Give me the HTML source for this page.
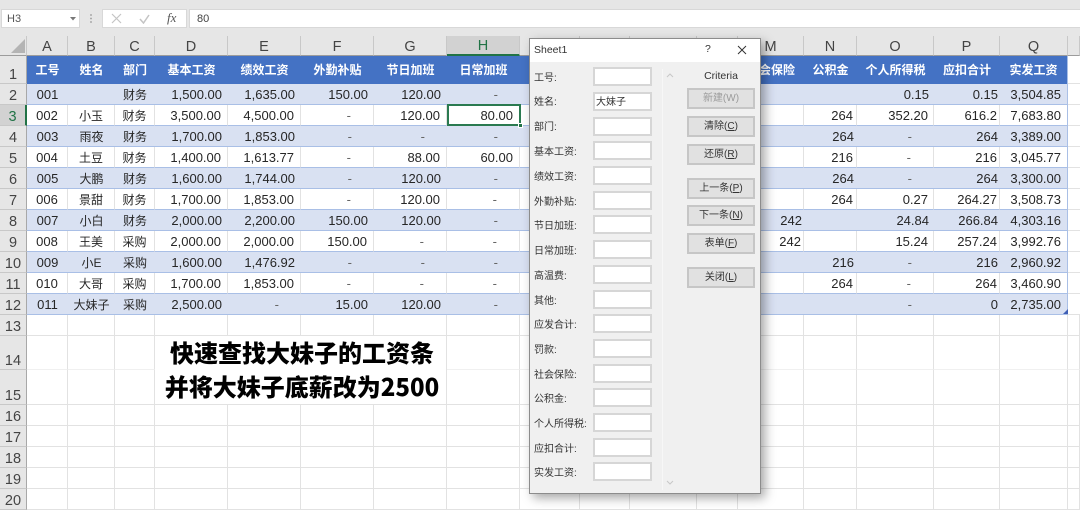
<!DOCTYPE html>
<html><head><meta charset="utf-8">
<style>
html,body{margin:0;padding:0;width:1080px;height:511px;overflow:hidden;background:#fff}
body{position:relative;font-family:"Liberation Sans","Noto Sans CJK SC",sans-serif;color:#222}
.abs{position:absolute}
#top{left:0;top:0;width:1080px;height:36px;background:#e6e6e6}
.box{position:absolute;background:#fff;border:1px solid #d8d8d8;box-sizing:border-box}
table{position:absolute;left:0;top:36px;border-collapse:separate;border-spacing:0;table-layout:fixed;width:1080px}
td,th{box-sizing:border-box;padding:0;overflow:hidden;white-space:nowrap;font-weight:400;border-right:1px solid #e2e2e2;border-bottom:1px solid #e2e2e2;font-size:13px;text-align:right;color:#262626}
tr.ch th{background:#e6e6e6;font-size:14.5px;color:#444;text-align:center;height:19px;line-height:16px;padding-top:2px;border-right:1px solid #c8c8c8;border-bottom:1px solid #9c9c9c}
th.r{background:#e6e6e6;font-size:14.5px;color:#444;text-align:center;vertical-align:bottom;line-height:16px;border-right:1px solid #a8a8a8;border-bottom:1px solid #c8c8c8}
tr.h td{background:#4472c4;color:#fff;font-weight:700;font-size:12px;text-align:center;border:0;vertical-align:middle;padding-bottom:2px}
tr.b td{background:#d9e1f2;border-right:0;border-bottom:1px solid #a9bfe6}
tr.w td{border-bottom:1px solid #a9bfe6}
tr td.e{background:#fff;border-right:0;border-bottom:1px solid #e2e2e2}
td.c{text-align:center;font-size:12px}
td.n{text-align:center;font-size:13px}
td.p6{padding-right:6px}td.p3{padding-right:3px}td.p2{padding-right:2px}td.p5{padding-right:5px}
td.d{padding-right:22px;color:#666}
tr.b td.q,tr.w td.q,tr.h td.q{border-right:1px solid #a9bfe6}
tr.lt td{border-bottom-color:#f0f0f0}
#dlg{left:529px;top:38px;width:232px;height:456px;background:#f0f0f0;border:1px solid #8c8c8c;box-sizing:border-box;box-shadow:4px 4px 10px rgba(0,0,0,.35);overflow:hidden}
#ttl{position:absolute;left:0;top:0;width:230px;height:23px;background:#fff}
#dlg .l{position:absolute;left:4px;margin-top:2px;font-size:10px;color:#333;line-height:14px;white-space:nowrap}
#dlg .i{position:absolute;left:63px;width:59px;height:19px;background:#fff;border:2px solid #d6d6d6;box-sizing:border-box;font-size:10px;line-height:17px;padding-left:1px;color:#333}
#dlg .b{position:absolute;left:157px;width:68px;height:21px;background:#e1e1e1;border:2px solid #c6c6c6;box-sizing:border-box;font-size:10px;line-height:17px;text-align:center;color:#333}
#dlg u{text-underline-offset:1px}
.big{position:absolute;left:102px;width:400px;text-align:center;font-family:"Noto Sans CJK SC",sans-serif;font-weight:900;font-size:24px;color:#000;line-height:34px}
</style></head><body>
<div class="abs" id="top">
<div class="box" style="left:1px;top:9px;width:79px;height:19px;font-size:11px;line-height:18px;padding-left:5px;color:#555">H3</div>
<svg class="abs" style="left:70px;top:17px" width="6" height="4"><path d="M0 0H6L3 3.5Z" fill="#777"/></svg>
<svg class="abs" style="left:89px;top:14px" width="4" height="10"><path d="M1 1h2M1 4.5h2M1 8h2" stroke="#aaa" stroke-width="1.4"/></svg>
<div class="box" style="left:102px;top:9px;width:85px;height:19px"></div>
<svg class="abs" style="left:111px;top:13px" width="11" height="11"><path d="M1 1L10 10M10 1L1 10" stroke="#c4c4c4" stroke-width="1.2" fill="none"/></svg>
<svg class="abs" style="left:139px;top:14px" width="11" height="10"><path d="M1 5L4.5 9L10 1" stroke="#c4c4c4" stroke-width="1.5" fill="none"/></svg>
<div class="abs" style="left:167px;top:10px;font:italic 13px 'Liberation Serif',serif;color:#555;line-height:16px">fx</div>
<div class="box" style="left:189px;top:9px;width:892px;height:19px;font-size:11px;line-height:18px;padding-left:7px;color:#444">80</div>
</div>
<table>
<colgroup><col style="width:27px"><col style="width:41px"><col style="width:47px"><col style="width:40px"><col style="width:73px"><col style="width:73px"><col style="width:73px"><col style="width:73px"><col style="width:73px"><col style="width:60px"><col style="width:50px"><col style="width:67px"><col style="width:41px"><col style="width:66px"><col style="width:53px"><col style="width:77px"><col style="width:66px"><col style="width:68px"><col style="width:12px"></colgroup>
<tr class="ch"><th style="background:#e6e6e6"></th><th>A</th><th>B</th><th>C</th><th>D</th><th>E</th><th>F</th><th>G</th><th style="background:#d2d2d2;color:#217346;border-bottom:2px solid #217346">H</th><th>I</th><th>J</th><th>K</th><th>L</th><th>M</th><th>N</th><th>O</th><th>P</th><th>Q</th><th></th></tr>
<tr class="h" style="height:28px"><th class="r">1</th><td>工号</td><td>姓名</td><td>部门</td><td>基本工资</td><td>绩效工资</td><td>外勤补贴</td><td>节日加班</td><td>日常加班</td><td>高温费</td><td></td><td></td><td></td><td>社会保险</td><td>公积金</td><td>个人所得税</td><td>应扣合计</td><td class="q">实发工资</td><td class="e"></td></tr>
<tr class="b" style="height:21px"><th class="r">2</th><td class="n">001</td><td class="c"></td><td class="c">财务</td><td class="p6">1,500.00</td><td class="p6">1,635.00</td><td class="p6">150.00</td><td class="p6">120.00</td><td class="d">-</td><td></td><td></td><td></td><td></td><td></td><td></td><td class="p5">0.15</td><td class="p2">0.15</td><td class="p6 q">3,504.85</td><td class="e"></td></tr>
<tr class="w" style="height:21px"><th class="r" style="background:#d2d2d2;color:#217346;border-right:2px solid #217346">3</th><td class="n">002</td><td class="c">小玉</td><td class="c">财务</td><td class="p6">3,500.00</td><td class="p6">4,500.00</td><td class="d">-</td><td class="p6">120.00</td><td class="p6">80.00</td><td></td><td></td><td></td><td></td><td></td><td class="p3">264</td><td class="p5">352.20</td><td class="p2">616.2</td><td class="p6 q">7,683.80</td><td class="e"></td></tr>
<tr class="b" style="height:21px"><th class="r">4</th><td class="n">003</td><td class="c">雨夜</td><td class="c">财务</td><td class="p6">1,700.00</td><td class="p6">1,853.00</td><td class="d">-</td><td class="d">-</td><td class="d">-</td><td></td><td></td><td></td><td></td><td></td><td class="p3">264</td><td class="d">-</td><td class="p2">264</td><td class="p6 q">3,389.00</td><td class="e"></td></tr>
<tr class="w" style="height:21px"><th class="r">5</th><td class="n">004</td><td class="c">土豆</td><td class="c">财务</td><td class="p6">1,400.00</td><td class="p6">1,613.77</td><td class="d">-</td><td class="p6">88.00</td><td class="p6">60.00</td><td></td><td></td><td></td><td></td><td></td><td class="p3">216</td><td class="d">-</td><td class="p2">216</td><td class="p6 q">3,045.77</td><td class="e"></td></tr>
<tr class="b" style="height:21px"><th class="r">6</th><td class="n">005</td><td class="c">大鹏</td><td class="c">财务</td><td class="p6">1,600.00</td><td class="p6">1,744.00</td><td class="d">-</td><td class="p6">120.00</td><td class="d">-</td><td></td><td></td><td></td><td></td><td></td><td class="p3">264</td><td class="d">-</td><td class="p2">264</td><td class="p6 q">3,300.00</td><td class="e"></td></tr>
<tr class="w" style="height:21px"><th class="r">7</th><td class="n">006</td><td class="c">景甜</td><td class="c">财务</td><td class="p6">1,700.00</td><td class="p6">1,853.00</td><td class="d">-</td><td class="p6">120.00</td><td class="d">-</td><td></td><td></td><td></td><td></td><td></td><td class="p3">264</td><td class="p5">0.27</td><td class="p2">264.27</td><td class="p6 q">3,508.73</td><td class="e"></td></tr>
<tr class="b" style="height:21px"><th class="r">8</th><td class="n">007</td><td class="c">小白</td><td class="c">财务</td><td class="p6">2,000.00</td><td class="p6">2,200.00</td><td class="p6">150.00</td><td class="p6">120.00</td><td class="d">-</td><td></td><td></td><td></td><td></td><td class="p2">242</td><td></td><td class="p5">24.84</td><td class="p2">266.84</td><td class="p6 q">4,303.16</td><td class="e"></td></tr>
<tr class="w" style="height:21px"><th class="r">9</th><td class="n">008</td><td class="c">王美</td><td class="c">采购</td><td class="p6">2,000.00</td><td class="p6">2,000.00</td><td class="p6">150.00</td><td class="d">-</td><td class="d">-</td><td></td><td></td><td></td><td></td><td class="p2">242</td><td></td><td class="p5">15.24</td><td class="p2">257.24</td><td class="p6 q">3,992.76</td><td class="e"></td></tr>
<tr class="b" style="height:21px"><th class="r">10</th><td class="n">009</td><td class="c">小E</td><td class="c">采购</td><td class="p6">1,600.00</td><td class="p6">1,476.92</td><td class="d">-</td><td class="d">-</td><td class="d">-</td><td></td><td></td><td></td><td></td><td></td><td class="p3">216</td><td class="d">-</td><td class="p2">216</td><td class="p6 q">2,960.92</td><td class="e"></td></tr>
<tr class="w" style="height:21px"><th class="r">11</th><td class="n">010</td><td class="c">大哥</td><td class="c">采购</td><td class="p6">1,700.00</td><td class="p6">1,853.00</td><td class="d">-</td><td class="d">-</td><td class="d">-</td><td></td><td></td><td></td><td></td><td></td><td class="p3">264</td><td class="d">-</td><td class="p2">264</td><td class="p6 q">3,460.90</td><td class="e"></td></tr>
<tr class="b" style="height:21px"><th class="r">12</th><td class="n">011</td><td class="c">大妹子</td><td class="c">采购</td><td class="p6">2,500.00</td><td class="d">-</td><td class="p6">15.00</td><td class="p6">120.00</td><td class="d">-</td><td></td><td></td><td></td><td></td><td></td><td></td><td class="d">-</td><td class="p2">0</td><td class="p6 q">2,735.00</td><td class="e"></td></tr>
<tr style="height:21px"><th class="r">13</th><td></td><td></td><td></td><td></td><td></td><td></td><td></td><td></td><td></td><td></td><td></td><td></td><td></td><td></td><td></td><td></td><td></td><td></td></tr>
<tr class="lt" style="height:34px"><th class="r">14</th><td></td><td></td><td></td><td style="border-right:0;border-bottom:0"></td><td style="border-right:0;border-bottom:0"></td><td style="border-right:0;border-bottom:0"></td><td style="border-bottom:0"></td><td></td><td></td><td></td><td></td><td></td><td></td><td></td><td></td><td></td><td></td><td></td></tr>
<tr style="height:35px"><th class="r">15</th><td></td><td></td><td></td><td style="border-right:0"></td><td style="border-right:0"></td><td style="border-right:0"></td><td></td><td></td><td></td><td></td><td></td><td></td><td></td><td></td><td></td><td></td><td></td><td></td></tr>
<tr style="height:21px"><th class="r">16</th><td></td><td></td><td></td><td></td><td></td><td></td><td></td><td></td><td></td><td></td><td></td><td></td><td></td><td></td><td></td><td></td><td></td><td></td></tr>
<tr style="height:21px"><th class="r">17</th><td></td><td></td><td></td><td></td><td></td><td></td><td></td><td></td><td></td><td></td><td></td><td></td><td></td><td></td><td></td><td></td><td></td><td></td></tr>
<tr style="height:21px"><th class="r">18</th><td></td><td></td><td></td><td></td><td></td><td></td><td></td><td></td><td></td><td></td><td></td><td></td><td></td><td></td><td></td><td></td><td></td><td></td></tr>
<tr style="height:21px"><th class="r">19</th><td></td><td></td><td></td><td></td><td></td><td></td><td></td><td></td><td></td><td></td><td></td><td></td><td></td><td></td><td></td><td></td><td></td><td></td></tr>
<tr style="height:21px"><th class="r">20</th><td></td><td></td><td></td><td></td><td></td><td></td><td></td><td></td><td></td><td></td><td></td><td></td><td></td><td></td><td></td><td></td><td></td><td></td></tr>
</table>
<svg class="abs" style="left:10px;top:38px" width="16" height="16"><path d="M15 1V15H1Z" fill="#b4b4b4"/></svg>
<div class="abs" style="left:447px;top:104px;width:74px;height:22px;border:2px solid #2a7a50;box-sizing:border-box"></div>
<div class="abs" style="left:518px;top:123px;width:3px;height:3px;background:#217346;border:1px solid #fff"></div>
<svg class="abs" style="left:1063px;top:309px" width="5" height="5"><path d="M5 0V5H0Z" fill="#3f5fb5"/></svg>
<div class="big" style="top:335px">快速查找大妹子的工资条</div>
<div class="big" style="top:369px">并将大妹子底薪改为2500</div>
<div class="abs" id="dlg">
<div id="ttl"></div>
<div class="abs" style="left:4px;top:3px;font-size:10.5px;line-height:17px;color:#333">Sheet1</div>
<div class="abs" style="left:175px;top:2px;font-size:10.5px;line-height:16px;color:#333">?</div>
<svg class="abs" style="left:207px;top:6px" width="10" height="10"><path d="M1 1L9 9M9 1L1 9" stroke="#333" stroke-width="1" fill="none"/></svg>
<div class="abs" style="left:132px;top:30px;width:1px;height:421px;background:#f7f7f7"></div>
<svg class="abs" style="left:136px;top:34px" width="8" height="5"><path d="M1 4L4 1L7 4" stroke="#c8c8c8" fill="none"/></svg>
<svg class="abs" style="left:136px;top:441px" width="8" height="5"><path d="M1 1L4 4L7 1" stroke="#c8c8c8" fill="none"/></svg>
<div class="abs" style="left:157px;width:68px;top:30px;text-align:center;font-size:10.5px;line-height:14px;color:#333">Criteria</div>
<div class="l" style="top:31px">工号:</div><div class="i" style="top:28px"></div>
<div class="l" style="top:55px">姓名:</div><div class="i" style="top:53px">大妹子</div>
<div class="l" style="top:80px">部门:</div><div class="i" style="top:78px"></div>
<div class="l" style="top:105px">基本工资:</div><div class="i" style="top:102px"></div>
<div class="l" style="top:130px">绩效工资:</div><div class="i" style="top:127px"></div>
<div class="l" style="top:155px">外勤补贴:</div><div class="i" style="top:152px"></div>
<div class="l" style="top:179px">节日加班:</div><div class="i" style="top:176px"></div>
<div class="l" style="top:204px">日常加班:</div><div class="i" style="top:201px"></div>
<div class="l" style="top:229px">高温费:</div><div class="i" style="top:226px"></div>
<div class="l" style="top:254px">其他:</div><div class="i" style="top:251px"></div>
<div class="l" style="top:278px">应发合计:</div><div class="i" style="top:275px"></div>
<div class="l" style="top:303px">罚款:</div><div class="i" style="top:300px"></div>
<div class="l" style="top:328px">社会保险:</div><div class="i" style="top:325px"></div>
<div class="l" style="top:352px">公积金:</div><div class="i" style="top:349px"></div>
<div class="l" style="top:377px">个人所得税:</div><div class="i" style="top:374px"></div>
<div class="l" style="top:402px">应扣合计:</div><div class="i" style="top:399px"></div>
<div class="l" style="top:426px">实发工资:</div><div class="i" style="top:423px"></div>
<div class="b" style="top:49px;color:#9a9a9a">新建(W)</div>
<div class="b" style="top:77px">清除(<u>C</u>)</div>
<div class="b" style="top:105px">还原(<u>R</u>)</div>
<div class="b" style="top:139px">上一条(<u>P</u>)</div>
<div class="b" style="top:166px">下一条(<u>N</u>)</div>
<div class="b" style="top:194px">表单(<u>F</u>)</div>
<div class="b" style="top:228px">关闭(<u>L</u>)</div>
</div>
</body></html>
